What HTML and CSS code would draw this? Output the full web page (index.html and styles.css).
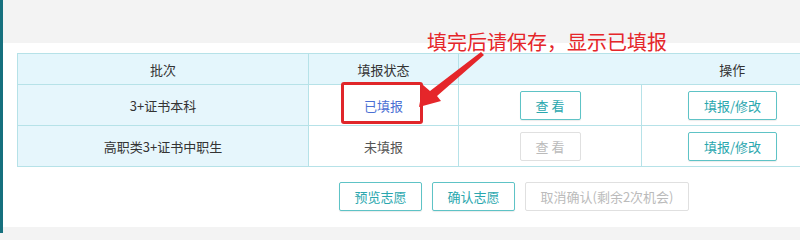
FILE: index.html
```html
<!DOCTYPE html>
<html lang="zh">
<head>
<meta charset="utf-8">
<link rel="stylesheet" href="styles.css">
</head>
<body>
<div class="page">
  <div class="strip"></div>
  <div class="main">
    <div class="topbar"></div>
    <div class="panel">
      <table class="grid">
        <colgroup>
          <col class="c1"><col class="c2"><col class="c3"><col class="c4">
        </colgroup>
        <thead>
          <tr>
            <th>批次</th>
            <th>填报状态</th>
            <th class="noright"></th>
            <th>操作</th>
          </tr>
        </thead>
        <tbody>
          <tr>
            <td class="batch">3+证书本科</td>
            <td class="done">已填报</td>
            <td><button class="btn">查 看</button></td>
            <td><button class="btn">填报/修改</button></td>
          </tr>
          <tr>
            <td class="batch">高职类3+证书中职生</td>
            <td class="todo">未填报</td>
            <td><button class="btn disabled">查 看</button></td>
            <td><button class="btn">填报/修改</button></td>
          </tr>
        </tbody>
      </table>
      <div class="actions">
        <button class="btn wide">预览志愿</button>
        <button class="btn wide">确认志愿</button>
        <button class="btn disabled cancel">取消确认(剩余2次机会)</button>
      </div>
    </div>
    <div class="bottombar"></div>
  </div>
  <div class="note">填完后请保存，显示已填报</div>
  <div class="redbox"></div>
  <svg class="arrow" width="80" height="70" viewBox="0 0 80 70">
    <polygon points="71,7 74,10 27,51 31,56 9,62 13,40 20,46" fill="#e5262a"/>
  </svg>
</div>
</body>
</html>
```
FILE: styles.css
```css
html, body {
  margin: 0;
  padding: 0;
  width: 800px;
  height: 233px;
  overflow: hidden;
  background: #f3f3f3;
  font-family: "Noto Sans CJK SC", "Noto Sans", sans-serif;
}
.page {
  position: relative;
  display: flex;
  width: 800px;
  height: 233px;
}
.strip {
  width: 3px;
  flex: none;
  background: #16707e;
}
.main {
  flex: 1;
  display: flex;
  flex-direction: column;
  min-width: 0;
}
.topbar {
  height: 43px;
  flex: none;
  background: #f3f3f3;
}
.panel {
  flex: none;
  background: #ffffff;
  padding: 10px 0 16px 14px;
}
.bottombar {
  flex: 1;
  background: #f3f3f3;
}
.grid {
  border-collapse: collapse;
  table-layout: fixed;
  width: 806px;
  border: 1px solid #9fd8de;
  font-size: 13px;
  color: #333;
}
.c1 { width: 291px; }
.c2 { width: 150px; }
.c3 { width: 183px; }
.c4 { width: 182px; }
.grid th {
  height: 30px;
  padding: 0;
  font-weight: normal;
  background: #e4f6fc;
  border: 1px solid #b6e2e8;
  color: #333;
}
.grid th.noright { border-right: none; }
.grid th.noright + th { border-left: none; }
.grid td {
  height: 40px;
  padding: 0;
  text-align: center;
  border: 1px solid #b6e2e8;
}
.grid td.batch { background: #e6f6fc; }
.done { color: #4a6fd4; }
.todo { color: #555; }
.btn {
  font-family: "Noto Sans CJK SC", "Noto Sans", sans-serif;
  font-size: 13px;
  color: #2aa7ae;
  background: #fff;
  border: 1px solid #5ec3c6;
  border-radius: 2px;
  height: 29px;
  width: 61px;
  padding: 0;
  box-shadow: 0 1px 1px rgba(0,0,0,0.08);
}
td:last-child .btn { width: 89px; }
.btn.disabled {
  color: #bbbbbb;
  border-color: #e0e0e0;
  box-shadow: none;
}
.actions {
  display: flex;
  gap: 10px;
  margin-top: 15px;
  padding-left: 322px;
}
.btn.wide { width: 83px; }
.btn.cancel { width: 164px; }
.note {
  position: absolute;
  left: 427px;
  top: 27px;
  font-size: 20px;
  color: #e5262a;
  white-space: nowrap;
}
.redbox {
  position: absolute;
  left: 341px;
  top: 82px;
  width: 82px;
  height: 42px;
  box-sizing: border-box;
  border: 3px solid #e0262a;
  border-radius: 3px;
}
.arrow {
  position: absolute;
  left: 410px;
  top: 45px;
}
```
